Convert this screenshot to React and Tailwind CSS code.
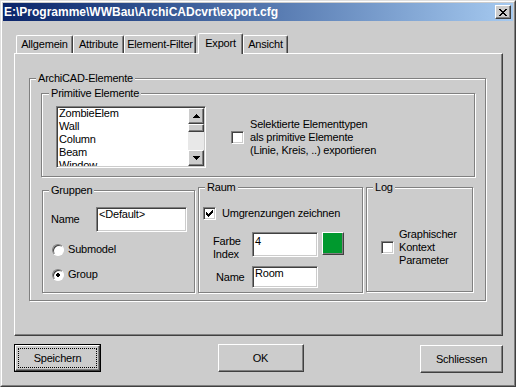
import React from 'react'

const GRAU = '#cccccc'

const HAKEN = [
  '......#',
  '.....##',
  '#...###',
  '##.###.',
  '#####..',
  '.###...',
  '..#....',
]

const KREUZ = [
  '##....##',
  '.##..##.',
  '..####..',
  '...##...',
  '..####..',
  '.##..##.',
  '##....##',
]

const PFEIL_HOCH = ['...#...', '..###..', '.#####.', '#######']
const PFEIL_RUNTER = ['#######', '.#####.', '..###..', '...#...']
const PUNKT = ['.##.', '####', '####', '.##.']

function Pix({ rows }) {
  const w = rows[0].length
  const h = rows.length
  return (
    <svg width={w} height={h} viewBox={`0 0 ${w} ${h}`} shapeRendering="crispEdges" className="block">
      {rows.flatMap((r, y) =>
        r.split('').map((c, x) =>
          c === '#' ? <rect key={`${x}-${y}`} x={x} y={y} width="1" height="1" fill="#000" /> : null
        )
      )}
    </svg>
  )
}

function Gruppe({ titel, className = '', labelClass = 'left-[6px]', children }) {
  return (
    <div className={`relative border border-[#808080] shadow-[inset_1px_1px_0_#fff,1px_1px_0_#fff] ${className}`}>
      <span className={`absolute -top-[7px] ${labelClass} px-[2px] bg-[#cccccc] leading-[13px] whitespace-nowrap`}>
        {titel}
      </span>
      {children}
    </div>
  )
}

function Checkbox({ checked }) {
  return (
    <div className="w-[13px] h-[13px] shrink-0 bg-white border border-t-[#808080] border-l-[#808080] border-r-white border-b-white shadow-[inset_1px_1px_0_#404040,inset_-1px_-1px_0_#cccccc] flex items-center justify-center">
      {checked && <Pix rows={HAKEN} />}
    </div>
  )
}

function Radio({ checked }) {
  return (
    <div className="w-[12px] h-[12px] shrink-0 rounded-full bg-white border border-t-[#808080] border-l-[#808080] border-r-white border-b-white shadow-[inset_1px_1px_0_#404040] flex items-center justify-center">
      {checked && <Pix rows={PUNKT} />}
    </div>
  )
}

function Eingabe({ wert, className = '' }) {
  return (
    <div className={`bg-white border border-t-[#808080] border-l-[#808080] border-r-white border-b-white shadow-[inset_1px_1px_0_#404040,inset_-1px_-1px_0_#cccccc] leading-[13px] whitespace-nowrap ${className}`}>
      {wert}
    </div>
  )
}

function Erhaben({ className = '', children }) {
  return (
    <div className={`bg-[#cccccc] border border-t-white border-l-white border-r-[#404040] border-b-[#404040] shadow-[inset_-1px_-1px_0_#808080] flex items-center justify-center ${className}`}>
      {children}
    </div>
  )
}

function Tab({ label, aktiv, className = '' }) {
  if (aktiv) {
    return (
      <div className={`relative z-10 h-[21px] -mb-[1px] bg-[#cccccc] border-t border-l border-t-white border-l-white border-r border-r-[#404040] shadow-[inset_-1px_0_0_#808080] rounded-t-[2px] flex items-center justify-center pb-[1px] ${className}`}>
        {label}
      </div>
    )
  }
  return (
    <div className={`h-[18px] border-t border-l border-t-white border-l-white border-r border-r-[#404040] shadow-[inset_-1px_0_0_#808080] rounded-t-[2px] flex items-center justify-center ${className}`}>
      {label}
    </div>
  )
}

const elemente = ['ZombieElem', 'Wall', 'Column', 'Beam', 'Window']

export default function App() {
  return (
    <div className="w-[516px] h-[387px] bg-[#cccccc] border border-t-[#dfdfdf] border-l-[#dfdfdf] border-r-[#404040] border-b-[#404040] font-['Liberation_Sans',Arial,sans-serif] text-[11px] tracking-[-0.2px] text-black overflow-hidden select-none">
      <div className="h-full border border-t-white border-l-white border-r-[#808080] border-b-[#808080] p-px flex flex-col">
        {/* Titelleiste */}
        <div className="h-[18px] shrink-0 bg-gradient-to-r from-[#0a246a] to-[#a6caf0] flex items-center justify-between pl-[1px] pr-[2px]">
          <span className="text-white font-bold text-[12px] tracking-normal leading-[18px] whitespace-nowrap">
            {'E:\\Programme\\WWBau\\ArchiCADcvrt\\export.cfg'}
          </span>
          <Erhaben className="w-[16px] h-[14px]">
            <Pix rows={KREUZ} />
          </Erhaben>
        </div>

        <div className="flex flex-col pl-[11px] pr-[10px] pt-[12px]">
          {/* Reiter */}
          <div className="h-[20px] flex items-end pl-[2px]">
            <Tab label="Allgemein" className="w-[57px]" />
            <Tab label="Attribute" className="w-[51px]" />
            <Tab label="Element-Filter" className="w-[72px]" />
            <Tab label="Export" aktiv className="w-[45px] ml-[2px]" />
            <Tab label="Ansicht" className="w-[45px]" />
          </div>

          {/* Seite */}
          <div className="h-[283px] border border-t-white border-l-white border-r-[#404040] border-b-[#404040] shadow-[inset_-1px_-1px_0_#808080] pl-[14px] pt-[24px]">
            <Gruppe titel="ArchiCAD-Elemente" className="w-[457px] h-[223px] pl-[11px] pt-[14px]">
              <Gruppe titel="Primitive Elemente" labelClass="left-[7px]" className="w-[434px] h-[84px] pl-[14px] pt-[12px]">
                <div className="flex items-center">
                  {/* Liste */}
                  <div className="w-[150px] h-[62px] bg-white border border-t-[#808080] border-l-[#808080] border-r-white border-b-white shadow-[inset_1px_1px_0_#404040,inset_-1px_-1px_0_#cccccc] p-px flex">
                    <div className="flex-1 overflow-hidden pl-[1px]">
                      <div className="-mt-[1px]">
                        {elemente.map((e) => (
                          <div key={e} className="leading-[13px] whitespace-nowrap">
                            {e}
                          </div>
                        ))}
                      </div>
                    </div>
                    <div className="w-[16px] flex flex-col bg-[#e8e8e8]">
                      <Erhaben className="h-[16px] shrink-0">
                        <Pix rows={PFEIL_HOCH} />
                      </Erhaben>
                      <Erhaben className="h-[8px] shrink-0" />
                      <div className="flex-1" />
                      <Erhaben className="h-[16px] shrink-0">
                        <Pix rows={PFEIL_RUNTER} />
                      </Erhaben>
                    </div>
                  </div>

                  <div className="ml-[25px]">
                    <Checkbox />
                  </div>
                  <div className="ml-[6px] leading-[13px]">
                    <div>Selektierte Elementtypen</div>
                    <div>als primitive Elemente</div>
                    <div>(Linie, Kreis, ..) exportieren</div>
                  </div>
                </div>
              </Gruppe>

              <div className="flex items-start mt-[10px]">
                <Gruppe titel="Gruppen" className="w-[153px] h-[103px] ml-[1px] mt-[3px] pl-[8px] pt-[16px]">
                  <div className="flex items-center">
                    <span className="w-[45px] leading-[13px]">Name</span>
                    <Eingabe wert="<Default>" className="w-[91px] h-[25px] pl-[2px]" />
                  </div>
                  <div className="flex items-center mt-[11px] pl-[1px]">
                    <Radio />
                    <span className="ml-[4px] leading-[13px]">Submodel</span>
                  </div>
                  <div className="flex items-center mt-[12px] pl-[1px]">
                    <Radio checked />
                    <span className="ml-[4px] leading-[13px]">Group</span>
                  </div>
                </Gruppe>

                <Gruppe titel="Raum" className="w-[165px] h-[106px] ml-[3px] pl-[4px] pt-[19px]">
                  <div className="flex items-center">
                    <Checkbox checked />
                    <span className="ml-[6px] leading-[13px]">Umgrenzungen zeichnen</span>
                  </div>
                  <div className="flex items-start mt-[12px]">
                    <div className="w-[49px] pl-[10px] pt-[3px] leading-[13px]">
                      <div>Farbe</div>
                      <div>Index</div>
                    </div>
                    <Eingabe wert="4" className="w-[66px] h-[25px] pl-[2px] pt-[2px]" />
                    <Erhaben className="w-[22px] h-[23px] ml-[4px] !bg-[#00992e]" />
                  </div>
                  <div className="flex items-center mt-[5px]">
                    <div className="w-[49px] pl-[13px] leading-[13px]">Name</div>
                    <Eingabe wert="Room" className="w-[66px] h-[22px] pl-[2px]" />
                  </div>
                </Gruppe>

                <Gruppe titel="Log" className="w-[107px] h-[105px] ml-[3px] pl-[14px] pt-[40px]">
                  <div className="flex items-center">
                    <Checkbox />
                    <div className="ml-[5px] leading-[13px]">
                      <div>Graphischer</div>
                      <div>Kontext</div>
                      <div>Parameter</div>
                    </div>
                  </div>
                </Gruppe>
              </div>
            </Gruppe>
          </div>

          {/* Knöpfe */}
          <div className="flex justify-between items-start mt-[8px]">
            <div className="w-[87px] h-[28px] border border-black">
              <Erhaben className="w-full h-full">
                <div className="flex-1 self-stretch m-[2px] border border-dotted border-black flex items-center justify-center">
                  Speichern
                </div>
              </Erhaben>
            </div>
            <Erhaben className="w-[86px] h-[28px]">OK</Erhaben>
            <Erhaben className="w-[83px] h-[28px] mt-[1px]">Schliessen</Erhaben>
          </div>
        </div>
      </div>
    </div>
  )
}
